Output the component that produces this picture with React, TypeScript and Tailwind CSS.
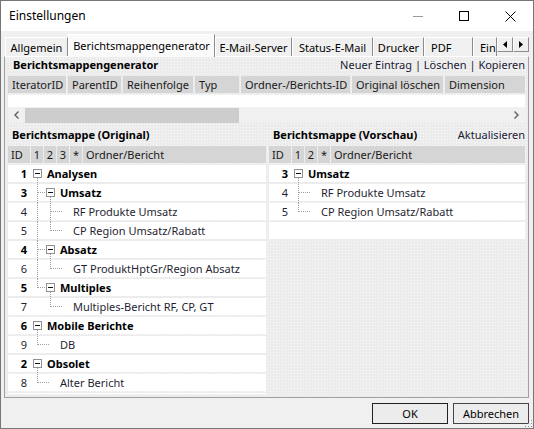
import React from 'react';

type Row = {
  id: number;
  label: string;
  depth: number;
  folder?: boolean;
  last?: boolean;
  pass?: number[];
};

const original: Row[] = [
  { id: 1, label: 'Analysen', depth: 0, folder: true },
  { id: 3, label: 'Umsatz', depth: 1, folder: true },
  { id: 4, label: 'RF Produkte Umsatz', depth: 2, pass: [0] },
  { id: 5, label: 'CP Region Umsatz/Rabatt', depth: 2, last: true, pass: [0] },
  { id: 4, label: 'Absatz', depth: 1, folder: true },
  { id: 6, label: 'GT ProduktHptGr/Region Absatz', depth: 2, last: true, pass: [0] },
  { id: 5, label: 'Multiples', depth: 1, folder: true, last: true },
  { id: 7, label: 'Multiples-Bericht RF, CP, GT', depth: 2, last: true },
  { id: 6, label: 'Mobile Berichte', depth: 0, folder: true },
  { id: 9, label: 'DB', depth: 1, last: true },
  { id: 2, label: 'Obsolet', depth: 0, folder: true },
  { id: 8, label: 'Alter Bericht', depth: 1, last: true },
];

const preview: Row[] = [
  { id: 3, label: 'Umsatz', depth: 0, folder: true },
  { id: 4, label: 'RF Produkte Umsatz', depth: 1 },
  { id: 5, label: 'CP Region Umsatz/Rabatt', depth: 1, last: true },
];

const gridCols = [
  { label: 'IteratorID', w: 'w-[58px]' },
  { label: 'ParentID', w: 'w-[53px]' },
  { label: 'Reihenfolge', w: 'w-[70px]' },
  { label: 'Typ', w: 'w-[44px]' },
  { label: 'Ordner-/Berichts-ID', w: 'w-[109px]' },
  { label: 'Original löschen', w: 'w-[91px]' },
  { label: 'Dimension', w: 'flex-1' },
];

const tabs = [
  { label: 'Allgemein', w: 'w-[63px]' },
  { label: 'Berichtsmappengenerator', w: 'w-[147px]', active: true },
  { label: 'E-Mail-Server', w: 'w-[77px]' },
  { label: 'Status-E-Mail', w: 'w-[81px]' },
  { label: 'Drucker', w: 'w-[51px]' },
  { label: 'PDF', w: 'w-[49px]', left: true },
  { label: 'Ein', w: 'w-[24px]', left: true },
];

const DOT = '#a0a0a0';

// Baumlinien (gepunktet) und +/- Kästchen
function Guides({ row }: { row: Row }) {
  const c = (k: number) => 7.5 + 13 * k;
  const d = row.depth;
  return (
    <svg width={17 + 13 * d} height={17} className="shrink-0 overflow-visible" shapeRendering="crispEdges">
      {(row.pass || []).map((k) => (
        <line key={k} x1={c(k)} x2={c(k)} y1={0} y2={19} stroke={DOT} strokeDasharray="1 1" />
      ))}
      {d > 0 && (
        <>
          <line x1={c(d - 1)} x2={c(d - 1)} y1={0} y2={row.last ? 9 : 19} stroke={DOT} strokeDasharray="1 1" />
          <line x1={c(d - 1)} x2={row.folder ? 3 + 13 * d : 7 + 13 * d} y1={8.5} y2={8.5} stroke={DOT} strokeDasharray="1 1" />
        </>
      )}
      {row.folder && (
        <>
          <line x1={c(d)} x2={c(d)} y1={13} y2={19} stroke={DOT} strokeDasharray="1 1" />
          <rect x={3.5 + 13 * d} y={4.5} width={8} height={8} fill="#fff" stroke="#919191" />
          <line x1={5 + 13 * d} x2={10 + 13 * d} y1={8.5} y2={8.5} stroke="#111" />
        </>
      )}
    </svg>
  );
}

function TreeRow({ row }: { row: Row }) {
  return (
    <div className="h-[17px] shrink-0 bg-white flex items-center whitespace-nowrap">
      <div className={`w-[22px] shrink-0 text-right pr-[3px] ${row.folder ? 'font-bold text-black' : 'text-[#1f1f33]'}`}>{row.id}</div>
      <Guides row={row} />
      <span className={row.folder ? 'font-bold text-black' : 'text-[#1f1f33]'}>{row.label}</span>
    </div>
  );
}

function HeadCell({ children, className }: { children?: React.ReactNode; className: string }) {
  return (
    <div className={`h-[17px] bg-[#d5d5d5] flex items-center shrink-0 text-[#1a1a1a] whitespace-nowrap overflow-hidden ${className}`}>
      {children}
    </div>
  );
}

function TreePanel({ title, action, levels, rows, className }: { title: string; action?: string; levels: string[]; rows: Row[]; className: string }) {
  return (
    <div className={`flex flex-col min-h-0 overflow-hidden ${className}`}>
      <div className="h-[15px] flex items-center justify-between shrink-0">
        <span className="font-bold pl-[4px]">{title}</span>
        {action && <span className="text-[#1a1a33]">{action}</span>}
      </div>
      <div className="mt-[4px] flex gap-[1px] shrink-0">
        <HeadCell className="w-[22px] pl-[3px]">ID</HeadCell>
        {levels.map((l) => (
          <HeadCell key={l} className="w-[12px] justify-center">{l}</HeadCell>
        ))}
        <HeadCell className="flex-1 pl-[3px]">Ordner/Bericht</HeadCell>
      </div>
      <div className="mt-[2px] flex flex-col gap-[2px]">
        {rows.map((r, i) => (
          <TreeRow key={i} row={r} />
        ))}
        <div className="h-[17px] shrink-0 bg-white" />
      </div>
    </div>
  );
}

export default function App() {
  return (
    <div className="w-[534px] h-[429px] border border-[#767676] bg-[#f0f0f0] flex flex-col overflow-hidden text-[11px] leading-none text-black font-['Noto_Sans',sans-serif]">
      {/* Titelleiste */}
      <div className="h-[30px] shrink-0 bg-white flex items-center">
        <span className="pl-[8px] flex-1 text-[12px]">Einstellungen</span>
        <div className="w-[46px] h-[30px] flex items-center justify-center">
          <div className="w-[10px] h-[1px] bg-[#9a9a9a]" />
        </div>
        <div className="w-[46px] h-[30px] flex items-center justify-center">
          <div className="w-[10px] h-[10px] border border-black" />
        </div>
        <div className="w-[46px] h-[30px] flex items-center justify-center">
          <svg width="11" height="11" viewBox="0 0 11 11">
            <path d="M0.5 0.5 L10.5 10.5 M10.5 0.5 L0.5 10.5" stroke="#000" strokeWidth="1" />
          </svg>
        </div>
      </div>

      {/* Reiter */}
      <div className="h-[25px] shrink-0 flex items-end pl-[4px] relative z-10">
        {tabs.map((t) =>
          t.active ? (
            <div key={t.label} className={`${t.w} h-[23px] -mb-[1px] shrink-0 bg-[#fafafa] border-t border-l border-r border-t-white border-l-white border-r-[#8c8c8c] flex justify-center pt-[5px] whitespace-nowrap`}>
              {t.label}
            </div>
          ) : (
            <div key={t.label} className={`${t.w} h-[19px] shrink-0 border-t border-l border-r border-t-white border-l-white border-r-[#8c8c8c] flex items-center ${t.left ? 'pl-[6px]' : 'justify-center'} whitespace-nowrap overflow-hidden`}>
              {t.label}
            </div>
          )
        )}
        <div className="h-[15px] self-start mt-[6px] flex shrink-0">
          <div className="w-[16px] h-[15px] bg-[#f0f0f0] border border-[#8c8c8c] border-t-white border-l-white flex items-center justify-center">
            <svg width="4" height="7"><polygon points="4,0 4,7 0,3.5" fill="#000" /></svg>
          </div>
          <div className="w-[16px] h-[15px] bg-[#f0f0f0] border border-[#8c8c8c] border-t-white border-l-white flex items-center justify-center">
            <svg width="4" height="7"><polygon points="0,0 0,7 4,3.5" fill="#000" /></svg>
          </div>
        </div>
      </div>

      {/* Reiterseite */}
      <div className="ml-[3px] w-[525px] h-[342px] shrink-0 border border-[#a0a0a0] border-t-white border-l-[#a0a0a0] px-[3px] flex flex-col bg-[#ececec] bg-[radial-gradient(circle,#fafafa_0.7px,transparent_0.8px)] bg-[length:3px_3px]">
        <div className="h-[15px] shrink-0 flex items-center justify-between">
          <span className="font-bold pl-[5px]">Berichtsmappengenerator</span>
          <span className="text-[#1a1a33]">Neuer Eintrag | Löschen | Kopieren</span>
        </div>

        <div className="mt-[4px] flex gap-[2px] shrink-0">
          {gridCols.map((c) => (
            <HeadCell key={c.label} className={`${c.w} pl-[4px]`}>{c.label}</HeadCell>
          ))}
        </div>
        <div className="mt-[2px] h-[12px] shrink-0 bg-white" />

        {/* horizontale Bildlaufleiste */}
        <div className="h-[16px] shrink-0 bg-[#f0f0f0] flex items-center">
          <div className="w-[17px] h-[16px] flex items-center justify-center">
            <svg width="5" height="8"><path d="M4.5 0.5 L1 4 L4.5 7.5" fill="none" stroke="#606060" strokeWidth="1.4" /></svg>
          </div>
          <div className="w-[214px] h-[15px] bg-[#cdcdcd]" />
          <div className="flex-1" />
          <div className="w-[17px] h-[16px] flex items-center justify-center">
            <svg width="5" height="8"><path d="M0.5 0.5 L4 4 L0.5 7.5" fill="none" stroke="#606060" strokeWidth="1.4" /></svg>
          </div>
        </div>

        <div className="mt-[4px] flex gap-[3px] flex-1 min-h-0 pb-[3px]">
          <TreePanel title="Berichtsmappe (Original)" levels={['1', '2', '3', '*']} rows={original} className="w-[258px] shrink-0" />
          <TreePanel title="Berichtsmappe (Vorschau)" action="Aktualisieren" levels={['1', '2', '*']} rows={preview} className="flex-1" />
        </div>
      </div>

      {/* Schaltflächen */}
      <div className="flex-1 flex items-start justify-end gap-[5px] pt-[5px] pr-[4px] relative">
        <button className="w-[76px] h-[21px] bg-[#ececec] border border-[#222] flex items-center justify-center">OK</button>
        <button className="w-[76px] h-[21px] bg-[#ececec] border border-[#444] flex items-center justify-center">Abbrechen</button>
        <svg width="10" height="10" className="absolute right-0 bottom-0" shapeRendering="crispEdges">
          {[[8, 2], [8, 5], [5, 5], [8, 8], [5, 8], [2, 8]].map(([x, y], i) => (
            <rect key={i} x={x} y={y} width={1} height={1} fill="#8a8a8a" />
          ))}
        </svg>
      </div>
    </div>
  );
}
